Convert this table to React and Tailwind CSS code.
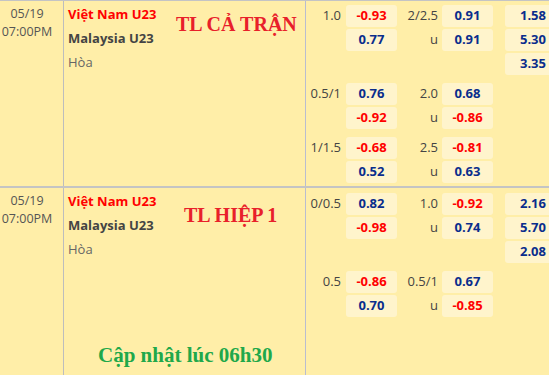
import React from 'react';

const B = 'b';
const R = 'r';

const rows = [
  {
    date: '05/19',
    time: '07:00PM',
    home: 'Việt Nam U23',
    away: 'Malaysia U23',
    draw: 'Hòa',
    groups: [
      [
        ['1.0', ['-0.93', R], '2/2.5', ['0.91', B], '1.58'],
        ['', ['0.77', B], 'u', ['0.91', B], '5.30'],
        ['', null, '', null, '3.35'],
      ],
      [
        ['0.5/1', ['0.76', B], '2.0', ['0.68', B]],
        ['', ['-0.92', R], 'u', ['-0.86', R]],
      ],
      [
        ['1/1.5', ['-0.68', R], '2.5', ['-0.81', R]],
        ['', ['0.52', B], 'u', ['0.63', B]],
      ],
    ],
  },
  {
    date: '05/19',
    time: '07:00PM',
    home: 'Việt Nam U23',
    away: 'Malaysia U23',
    draw: 'Hòa',
    groups: [
      [
        ['0/0.5', ['0.82', B], '1.0', ['-0.92', R], '2.16'],
        ['', ['-0.98', R], 'u', ['0.74', B], '5.70'],
        ['', null, '', null, '2.08'],
      ],
      [
        ['0.5', ['-0.86', R], '0.5/1', ['0.67', B]],
        ['', ['0.70', B], 'u', ['-0.85', R]],
      ],
    ],
  },
];

const Odd = ({ v }) => {
  if (!v) return <div className="w-[51px] h-[22px]" />;
  return (
    <div
      className={
        'w-[51px] h-[22px] rounded-[3px] bg-[#fff4cc] flex items-center justify-center font-bold ' +
        (v[1] === R ? 'text-[#ff0000]' : 'text-[#0a2d8c]')
      }
    >
      {v[0]}
    </div>
  );
};

const Line = ({ cells }) => (
  <div className="flex items-center h-[22px]">
    <div className="w-[40px] pr-[5px] text-right text-[#444]">{cells[0]}</div>
    <Odd v={cells[1]} />
    <div className="w-[45px] pr-[4px] text-right text-[#444]">{cells[2]}</div>
    <Odd v={cells[3]} />
    {cells.length > 4 && (
      <div className="ml-[12px] w-[56px] h-[22px] rounded-[3px] bg-[#fff4cc] flex items-center justify-center font-bold text-[#0a2d8c]">
        {cells[4]}
      </div>
    )}
  </div>
);

const MatchRow = ({ m, children, last }) => (
  <div className={'flex ' + (last ? 'h-[188px]' : 'h-[187px] border-b-2 border-[#c4c4c4]')}>
    <div className="w-[64px] border-r border-[#bdbdbd] pt-[4px] text-[#555] leading-[18px] text-[12.5px] shrink-0">
      <div className="w-[54px] text-center whitespace-nowrap">{m.date}</div>
      <div className="w-[54px] text-center whitespace-nowrap">{m.time}</div>
    </div>
    <div className="relative w-[242px] border-r border-[#b9bdd0] pl-[4px] pt-[1px] leading-[24px] shrink-0">
      <div className="font-bold text-[#ff0000]">{m.home}</div>
      <div className="font-bold text-[#444]">{m.away}</div>
      <div className="text-[#666]">{m.draw}</div>
      {children}
    </div>
    <div className={'flex flex-col gap-[8px] ' + (last ? 'pt-[5px]' : 'pt-[4px]')}>
      {m.groups.map((g, i) => (
        <div key={i} className="flex flex-col gap-[2px]">
          {g.map((c, j) => (
            <Line key={j} cells={c} />
          ))}
        </div>
      ))}
    </div>
  </div>
);

export default function App() {
  const serif = { fontFamily: '"Liberation Serif", "Times New Roman", serif' };
  return (
    <div
      className="w-[549px] h-[375px] overflow-hidden bg-[#ffeea8] border-t border-[#c4c4c4] text-[13px]"
      style={{ fontFamily: '"Open Sans", "Noto Sans", sans-serif' }}
    >
      <div className="w-[620px]">
        <MatchRow m={rows[0]}>
          <div className="absolute left-[112px] top-[13px] text-[20px] leading-none font-bold text-[#e8202a] whitespace-nowrap" style={serif}>
            TL CẢ TRẬN
          </div>
        </MatchRow>
        <MatchRow m={rows[1]} last>
          <div className="absolute left-[120px] top-[17px] text-[20px] leading-none font-bold text-[#e8202a] whitespace-nowrap" style={serif}>
            TL HIỆP 1
          </div>
          <div className="absolute left-[34px] top-[157px] text-[21px] leading-none font-bold text-[#20a84a] whitespace-nowrap" style={serif}>
            Cập nhật lúc 06h30
          </div>
        </MatchRow>
      </div>
    </div>
  );
}
